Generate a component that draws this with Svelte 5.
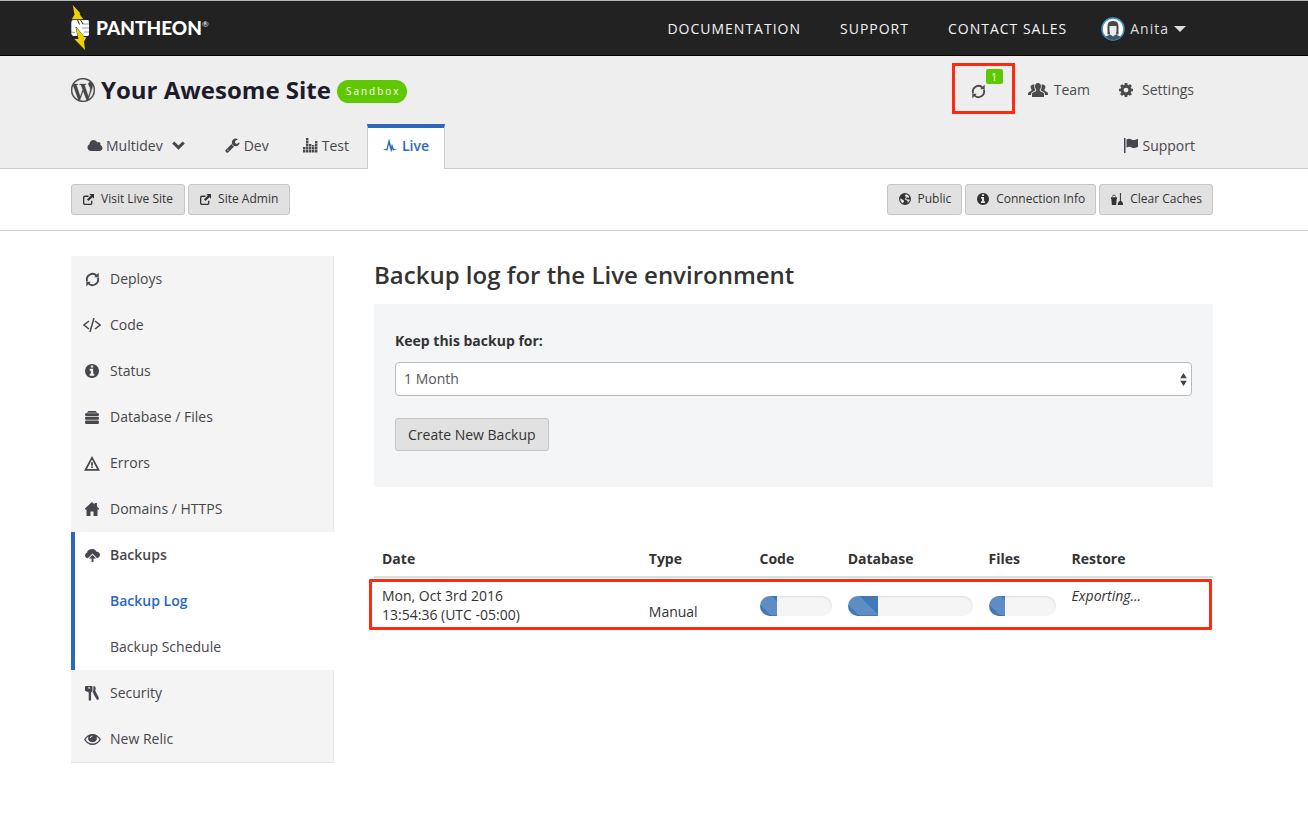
<script>
  const shapes = {
    cloud: { box: '0 0 2048 1792', d: 'M1984 1152q0 159-112.5 271.5t-271.5 112.5h-1088q-185 0-316.5-131.5t-131.5-316.5q0-132 71-241.5t187-163.5q-2-28-2-43 0-212 150-362t362-150q158 0 286.5 88t187.5 230q70-62 166-62 106 0 181 75t75 181q0 75-41 138 129 30 213 134.5t84 239.5z' },
    info: { box: '128 128 1536 1536', d: 'M1152 1376v-160q0-14-9-23t-23-9h-96v-512q0-14-9-23t-23-9h-320q-14 0-23 9t-9 23v160q0 14 9 23t23 9h96v320h-96q-14 0-23 9t-9 23v160q0 14 9 23t23 9h448q14 0 23-9t9-23zm-128-896v-160q0-14-9-23t-23-9h-192q-14 0-23 9t-9 23v160q0 14 9 23t23 9h192q14 0 23-9t9-23zm640 416q0 209-103 385.5t-279.5 279.5-385.5 103-385.5-103-279.5-279.5-103-385.5 103-385.5 279.5-279.5 385.5-103 385.5 103 279.5 279.5 103 385.5z' },
    wrench: { box: '64 64 1700 1728', d: 'M448 1472q0-26-19-45t-45-19-45 19-19 45 19 45 45 19 45-19 19-45zm644-420l-682 682q-37 37-90 37-52 0-91-37l-106-108q-38-36-38-90 0-53 38-91l681-681q39 98 114.5 173.5t173.5 114.5zm634-435q0 39-23 106-47 134-164.5 217.5t-258.5 83.5q-185 0-316.5-131.5t-131.5-316.5 131.5-316.5 316.5-131.5q58 0 121.5 16.5t107.5 46.5q16 11 16 28t-16 28l-293 169v224l193 107q5-3 79-48.5t135.5-81 70.5-35.5q15 0 23.5 10t8.5 25z' },
    cog: { box: '128 128 1536 1536', d: 'M1152 896q0-106-75-181t-181-75-181 75-75 181 75 181 181 75 181-75 75-181zm512-109v222q0 12-8 23t-20 13l-185 28q-19 54-39 91 35 50 107 138 10 12 10 25t-9 23q-27 37-99 108t-94 71q-12 0-26-9l-138-108q-44 23-91 38-16 136-29 186-7 28-36 28h-222q-14 0-24.5-8.5t-11.5-21.5l-28-184q-49-16-90-37l-141 107q-10 9-25 9-14 0-25-11-126-114-165-168-7-10-7-23 0-12 8-23 15-21 51-66.5t54-70.5q-27-50-41-99l-183-27q-13-2-21-12.5t-8-23.5v-222q0-12 8-23t19-13l186-28q14-46 39-92-40-57-107-138-10-12-10-24 0-10 9-23 26-36 98.5-107.5t94.5-71.5q13 0 26 10l138 107q44-23 91-38 16-136 29-186 7-28 36-28h222q14 0 24.5 8.5t11.5 21.5l28 184q49 16 90 37l142-107q9-9 24-9 13 0 25 10 129 119 165 170 7 8 7 22 0 12-8 23-15 21-51 66.5t-54 70.5q26 50 41 98l183 28q13 2 21 12.5t8 23.5z' },
    users: { box: '0 0 20 14', d: 'M10 0c1.900 0 3 1.400 3 3.300 0 1.300-.5 2.500-1.200 3.200-.3.900 0 1.500.8 1.900l2.400 1.100c.8.400 1 .9 1 1.800V14H4v-2.700c0-.9.200-1.400 1-1.800l2.400-1.100c.8-.4 1.100-1 .8-1.900C7.500 5.800 7 4.600 7 3.300 7 1.400 8.100 0 10 0zM5.500 1.500c.4 0 .7.100 1 .2C6 3.400 6.300 5.300 7.300 6.800c.1.500-.1.800-.6 1L4.300 9c-.8.400-1.100 1-1.300 3H0V10.800c0-.9.200-1.200.8-1.500l2-1.200c.7-.4.900-1.100.6-1.800C2.800 5.500 2.600 4.700 2.600 4c0-1.500 1.100-2.500 2.900-2.500zM14.500 1.500c-.4 0-.7.100-1 .2.500 1.700.2 3.600-.8 5.100-.1.500.1.800.6 1L15.700 9c.8.400 1.100 1 1.300 3h3v-1.200c0-.9-.2-1.200-.8-1.500l-2-1.200c-.7-.4-.9-1.100-.6-1.800.6-.8.800-1.600.8-2.300 0-1.500-1.100-2.500-2.900-2.500z' },
    chevron: { box: '0 0 13 9', d: 'M2.300.5 6.500 4.500 10.700.5 12.800 2.600 6.500 8.800.2 2.600z' },
    bars: { box: '0 0 15 15', d: 'M0 12h2.400v2.400H0zM0 9h2.400v2.400H0zM3 12h2.400v2.400H3zM3 9h2.400v2.400H3zM3 6h2.400v2.400H3zM3 3h2.400v2.400H3zM3 0h2.400v2.400H3zM6 12h2.400v2.400H6zM6 9h2.400v2.400H6zM6 6h2.400v2.400H6zM9 12h2.400v2.400H9zM9 9h2.400v2.400H9zM9 7h2.400v1.400H9zM12 12h2.400v2.400H12zM12 9h2.400v2.400H12zM12 6h2.400v2.400H12zM12 3h2.400v2.400H12z' },
    pulse: { box: '0 0 14 15', d: 'M0 11.600 3.500 10.800 6 .5 8.200 8.500 9 5.500 10.700 10.800 14 11.600 9.800 12.400 9.200 10.800 8.300 14.500 5.900 6.500 4.400 12.400z' },
    external: { box: '0 0 14 14', d: 'M2.600 2H7v1.700H3c-.7 0-1.300.6-1.300 1.300v6c0 .7.600 1.300 1.300 1.300h6c.7 0 1.300-.6 1.300-1.300V8.500H12v2.900c0 1.500-1.100 2.600-2.600 2.600H2.600C1.100 14 0 12.900 0 11.400V4.600C0 3.100 1.100 2 2.600 2zM8 0h6v6l-2-2-5 5-2-2 5-5z' },
    globe: { box: '0 0 16 16', d: 'M8 0a8 8 0 1 0 0 16A8 8 0 0 0 8 0zM9.500 1.800c1.800.4 3.400 1.700 4.200 3.300l-1 1.400-1.500-.9-1.500.9-.2 1.500 2 .7 2.300-.4.500 1.200-1.200 2.200-1.700 1.700.2-2.400-2-1.700-1.800-.5.600-2.300 1.500-1.500-.8-.7L8.300 5l-.7-1.600zM2 7l2 1.400 2.300 1.100.6 1.800-1.200 1L5.400 14C3.200 12.900 1.700 10.700 1.700 8.300z' },
    flag: { box: '0 0 14 15', d: 'M0 0h1.500v15H0zM2.500 1.500c2-1.200 3.500-1 5 0 1.600 1 3.600.8 6.500-.7v8c-2.500 1.500-4.500 1.600-6.300.6-1.600-1-3.200-1-5.200.2z' },
    bucket: { box: '0 0 14 14', d: 'M0 5h7v2H6.600L6 14H1L.4 7H0zM1.300 4.500C1.500 2.700 2.300 2 3.500 2s2 .7 2.200 2.500H5C4.800 3.300 4.300 2.800 3.500 2.800S2.200 3.300 2 4.500zM10.400 0h1.200v9.500h1L14 12v2H8v-2l1.400-2.500h1z' },
    stack: { box: '0 0 14 13', d: 'M3.500 0h7L12.500 1.800h-11zM1 2.300h12q1 0 1 1.300t-1 1.400H1q-1 0-1-1.400t1-1.300zM1 5.700h12q1 0 1 1.500t-1 1.500H1q-1 0-1-1.500t1-1.500zM1 9.500h12q1 0 1 1.700T13 13H1q-1 0-1-1.800t1-1.700z' },
    warning: { box: '0 0 16 15', d: 'M8 0 16 14.800H0zM8 3.600 3 12.900h10zM7.100 6.200h1.800v3.500H7.100zM7.100 10.500h1.800v1.500H7.100z' },
    home: { box: '0 0 14 14', d: 'M7 0 9.700 2.500V1h2.200v3.500L14 6.600V7.500h-1.500V14H8.500V9.500h-3V14h-4V7.500H0V6.600z' },
    upload: { box: '0 0 16 14', d: 'M8 0c2 0 3.400 1 4 2.700C14.300 2.700 16 4.200 16 6.300c0 1.900-1.300 3.300-3 3.600L8 4.800 3 9.900C1.200 9.700 0 8.600 0 7c0-1.500.9-2.700 2.200-3.100C2.400 1.500 4.800 0 8 0zM8 6.200l3.800 4H9V14H7v-3.800H4.200z' },
    keys: { box: '0 0 15 16', d: 'M1 0h6c.8 0 1 .4 1 1v4c0 .7-.4 1.100-1.200 1.500L6.500 7v8L5.300 16 4 15V7L3 6.500 0 5V1c0-.6.300-1 1-1zM3.500 1.300v1.400h2V1.300zM9 0c1.500.200 2.600 1 2.500 2.500L11 5l3.800 7.500-.3 2.200h-1.700L9 8.500V7.200L7.800 6.800C9 5.500 9 4.500 9 3z' },
    eye: { box: '0 0 17 11', d: 'M8.500 0C12 0 15 2 17 5.500 15 9 12 11 8.500 11S2 9 0 5.500C2 2 5 0 8.500 0zM4.600 2.600C3.300 3.300 2.200 4.300 1.500 5.500 3 8 5.500 9.600 8.500 9.600s5.500-1.600 7-4.100c-.7-1.200-1.800-2.200-3.100-2.900 1.500 3-.6 5.700-3.900 5.700S3.100 5.600 4.600 2.600zM8.500 1.700C7 1.700 6 2.600 5.900 4.100h1C7 3.200 7.600 2.600 8.500 2.600z' },
    caret: { box: '0 0 12 6', d: 'M0 0h12L6 6z' }
  };

  const topLinks = ['DOCUMENTATION', 'SUPPORT', 'CONTACT SALES'];

  const menu = [
    { label: 'Deploys', icon: 'refresh', w: 15, h: 15 },
    { label: 'Code', icon: 'code', w: 18, h: 14 },
    { label: 'Status', icon: 'info', w: 14, h: 14 },
    { label: 'Database / Files', icon: 'stack', w: 14, h: 13 },
    { label: 'Errors', icon: 'warning', w: 16, h: 15 },
    { label: 'Domains / HTTPS', icon: 'home', w: 14, h: 14 },
    {
      label: 'Backups', icon: 'upload', w: 15, h: 13,
      children: [{ label: 'Backup Log', active: true }, { label: 'Backup Schedule', active: false }]
    },
    { label: 'Security', icon: 'keys', w: 14, h: 15 },
    { label: 'New Relic', icon: 'eye', w: 17, h: 11 }
  ];

  const periods = ['1 Month', '6 Months', '1 Year'];
  let keep = $state('1 Month');

  const backup = { day: 'Mon, Oct 3rd 2016', time: '13:54:36 (UTC -05:00)', type: 'Manual', parts: [24, 24, 24] };
</script>

{#snippet icon(name, w, h)}
  {#if name === 'code'}
    <svg class="icon" width={w} height={h} viewBox="0 0 18 14" fill="none" stroke="currentColor" stroke-width="1.500" aria-hidden="true">
      <path d="M6 3 1 7l5 4M12 3l5 4-5 4M11 0 7 14" />
    </svg>
  {:else if name === 'refresh'}
    <svg class="icon" width={w} height={h} viewBox="0 0 16 16" fill="none" stroke="currentColor" stroke-width="1.900" aria-hidden="true">
      <path d="M2.300 10A6.100 6.100 0 0 1 12.400 3.800M13.700 6A6.100 6.100 0 0 1 3.600 12.200" />
      <path fill="currentColor" stroke="none" d="M14.600.9V5.500H9.800zM1.400 15.100V10.500H6.200z" />
    </svg>
  {:else}
    <svg class="icon" width={w} height={h} viewBox={shapes[name].box} fill="currentColor" fill-rule="evenodd" aria-hidden="true">
      <path d={shapes[name].d} />
    </svg>
  {/if}
{/snippet}

<div class="page">
  <header class="topbar">
    <div class="wrap topbar-row">
      <a class="logo" href="#home">
        <svg width="19" height="46" viewBox="0 0 19 46" aria-hidden="true">
          <path fill="#fff" d="M2.500 15H17.500l.5 3v12l-1 1H2L.3 29V18q0-3 2.200-3z" />
          <path fill="none" stroke="#555" stroke-width=".6" d="M11.500 19h6.500M11 23h7M13 27h5M0 27l4 .5" />
          <path fill="none" stroke="#222" stroke-width="1" d="M6.500 15l2 4.500M9.500 15l2.500 4" />
          <path fill="#efd000" d="M1.800 0 9.500 8.500 8.500 9 12.300 14.300H.8L3.500 9.500z" />
          <path fill="#efd000" stroke="#222" stroke-width=".8" paint-order="stroke" d="M5 22 13 32h2.500L13 36.500l1 8.500L3.300 34H7.500z" />
        </svg>
        <span class="logo-text">PANTHEON<sup>®</sup></span>
      </a>
      <nav class="topnav">
        {#each topLinks as link}
          <a href="#top">{link}</a>
        {/each}
        <button class="user" type="button">
          <svg width="24" height="24" viewBox="0 0 24 24" aria-hidden="true">
            <circle cx="12" cy="12" r="11" fill="#fff" stroke="#3e93c6" stroke-width="1.500" />
            <path fill="#484848" d="M6.500 17.500V9Q6.500 4 12 4t5.500 5v8.500H15V10H9v7.500z" />
            <path fill="#e6ebee" d="M8.500 9h7v5q0 2.500-2 3.500v2h-3v-2q-2-1-2-3.500z" />
            <path fill="#41566b" d="M4.500 19.500 9.500 17.500 12 19.500l2.500-2 5 2Q16.500 23 12 23t-7.500-3.500z" />
          </svg>
          <span>Anita</span>
          {@render icon('caret', 12, 6)}
        </button>
      </nav>
    </div>
  </header>

  <section class="sitehead">
    <div class="wrap">
      <div class="title-row">
        <svg class="wp" width="24" height="24" viewBox="0 0 24 24" fill="currentColor" stroke="currentColor" stroke-width=".3" aria-hidden="true">
          <path d="M21.469 6.825c.84 1.537 1.318 3.3 1.318 5.175 0 3.979-2.156 7.456-5.363 9.325l3.295-9.527c.615-1.54.82-2.771.82-3.864 0-.405-.026-.78-.07-1.11m-7.981.105c.647-.03 1.232-.105 1.232-.105.582-.075.514-.93-.067-.899 0 0-1.755.135-2.88.135-1.064 0-2.85-.15-2.85-.15-.585-.03-.661.855-.075.885 0 0 .54.061 1.125.09l1.68 4.605-2.37 7.08L5.354 6.9c.649-.03 1.234-.1 1.234-.1.585-.075.516-.93-.065-.896 0 0-1.746.138-2.874.138-.2 0-.438-.008-.69-.015C4.911 3.15 8.235 1.215 12 1.215c2.809 0 5.365 1.072 7.286 2.833-.046-.003-.091-.009-.141-.009-1.06 0-1.812.923-1.812 1.914 0 .89.513 1.643 1.06 2.531.411.72.89 1.643.89 2.977 0 .915-.354 1.994-.821 3.479l-1.075 3.585-3.9-11.61.001.014zM12 22.784c-1.059 0-2.081-.153-3.048-.437l3.237-9.406 3.315 9.087c.024.053.05.101.078.149-1.12.393-2.325.609-3.582.609M1.211 12c0-1.564.336-3.05.935-4.39L7.29 21.709C3.694 19.96 1.212 16.271 1.211 12M12 0C5.385 0 0 5.385 0 12s5.385 12 12 12 12-5.385 12-12S18.615 0 12 0" />
        </svg>
        <h1>Your Awesome Site</h1>
        <span class="plan">Sandbox</span>
        <div class="actions">
          <button class="jobs" type="button" aria-label="Workflows">
            {@render icon('refresh', 15, 15)}
            <span class="count">1</span>
          </button>
          <a class="team" href="#team">{@render icon('users', 20, 14)}Team</a>
          <a class="settings" href="#settings">{@render icon('cog', 14, 14)}Settings</a>
        </div>
      </div>
      <nav class="tabs">
        <a class="tab multidev" href="#multidev">{@render icon('cloud', 16, 14)}Multidev<span class="more">{@render icon('chevron', 13, 9)}</span></a>
        <a class="tab" href="#dev">{@render icon('wrench', 15, 15)}Dev</a>
        <a class="tab" href="#test">{@render icon('bars', 15, 15)}Test</a>
        <a class="tab active" href="#live">{@render icon('pulse', 14, 15)}Live</a>
        <a class="support" href="#support">{@render icon('flag', 14, 15)}Support</a>
      </nav>
    </div>
  </section>

  <section class="toolbar">
    <div class="wrap toolbar-row">
      <button class="btn small" type="button">{@render icon('external', 11, 11)}Visit Live Site</button>
      <button class="btn small" type="button">{@render icon('external', 11, 11)}Site Admin</button>
      <div class="env-tools">
        <button class="btn small" type="button">{@render icon('globe', 12, 12)}Public</button>
        <button class="btn small" type="button">{@render icon('info', 12, 12)}Connection Info</button>
        <button class="btn small" type="button">{@render icon('bucket', 12, 12)}Clear Caches</button>
      </div>
    </div>
  </section>

  <div class="wrap content">
    <nav class="side">
      {#each menu as item}
        <div class="group" class:open={item.children}>
          <a class="item" href="#section"><span class="slot">{@render icon(item.icon, item.w, item.h)}</span>{item.label}</a>
          {#each item.children ?? [] as child}
            <a class="item sub" class:current={child.active} href="#section">{child.label}</a>
          {/each}
        </div>
      {/each}
    </nav>

    <main>
      <h2>Backup log for the Live environment</h2>
      <form class="panel" onsubmit={(e) => e.preventDefault()}>
        <label for="keep">Keep this backup for:</label>
        <div class="select">
          <select id="keep" bind:value={keep}>
            {#each periods as p}
              <option>{p}</option>
            {/each}
          </select>
          <svg width="7" height="13" viewBox="0 0 7 13" fill="#444" aria-hidden="true"><path d="M3.500 0 6.800 5.300H.2zM3.500 13 6.800 7.700H.2z" /></svg>
        </div>
        <button class="btn" type="submit">Create New Backup</button>
      </form>

      <div class="log">
        <table>
          <colgroup>
            <col class="c-date" /><col class="c-type" /><col class="c-code" /><col class="c-db" /><col class="c-files" /><col />
          </colgroup>
          <thead>
            <tr><th>Date</th><th>Type</th><th>Code</th><th>Database</th><th>Files</th><th>Restore</th></tr>
          </thead>
          <tbody>
            <tr>
              <td>{backup.day}<br />{backup.time}</td>
              <td class="type">{backup.type}</td>
              {#each backup.parts as value}
                <td><div class="progress"><div class="bar" style="width: {value}%"></div></div></td>
              {/each}
              <td><em>Exporting...</em></td>
            </tr>
          </tbody>
        </table>
        <div class="row-mark"></div>
      </div>
    </main>
  </div>
</div>

<style>
  :global(body) { margin: 0; background: #fff; }
  .page { font: 14px/20px "Open Sans", sans-serif; color: #333; }
  .page, .page * { box-sizing: border-box; }
  a { color: inherit; text-decoration: none; }
  button, select { font: inherit; color: inherit; margin: 0; }
  .icon { flex: none; display: block; }
  .wrap { padding: 0 95px 0 71px; }

  .topbar { background: #222; border-top: 1px solid #b4b8b7; border-bottom: 1px solid #000; }
  .topbar-row { display: flex; align-items: center; justify-content: space-between; height: 54px; }
  .logo { display: flex; align-items: center; gap: 6px; color: #fff; }
  .logo-text { display: flex; font: 900 19px/24px Lato, sans-serif; }
  .logo-text sup { font: 8px/12px Lato, sans-serif; margin-top: 2px; }
  .topnav { display: flex; align-items: center; gap: 39px; color: #f4f4f4; letter-spacing: 1px; padding: 2px 27px 0 0; }
  .user { display: flex; align-items: center; gap: 5px; margin-left: -5px; padding: 0; border: 0; background: none; color: #ddd; letter-spacing: 1px; }

  .sitehead { background: #eee; border-bottom: 1px solid #ccc; color: #46464f; }
  .title-row { display: flex; align-items: center; height: 68px; }
  .wp { color: #464646; }
  h1 { margin: 0 6px; font-size: 24px; line-height: 32px; font-weight: 700; color: #1e1c2c; }
  .plan { margin-top: 2px; padding: 0 6px 0 9px; border-radius: 12px; background: #60c800; color: #fff; font-size: 10px; line-height: 23px; letter-spacing: 2px; }
  .actions { display: flex; align-items: flex-start; margin-left: auto; padding-right: 19px; color: #4b4b4b; }
  .actions a { display: flex; align-items: center; height: 58px; }
  .jobs { position: relative; display: grid; place-items: center; width: 63px; height: 51px; margin-top: 2px; padding: 6px 9px 0 0; border: 3px solid #ff2a0d; background: none; }
  .count { position: absolute; top: 3px; right: 9px; width: 17px; border-radius: 2px; background: #60c800; color: #fff; font-size: 11px; line-height: 15px; }
  .team { gap: 6px; margin-left: 13px; }
  .settings { gap: 9px; margin-left: 29px; }

  .tabs { display: flex; gap: 2px; height: 45px; margin-bottom: -1px; }
  .tab { display: flex; align-items: center; gap: 4px; padding: 0 16px 2px; }
  .more { padding-left: 6px; }
  .multidev { gap: 3px; padding-right: 22px; }
  .tab.active { gap: 5px; padding: 0 15px 6px; border: 1px solid #ccc; border-top: 4px solid #2c68b9; border-bottom: 0; background: #fff; color: #2a69bc; font-weight: 600; }
  .support { display: flex; align-items: center; gap: 4px; margin-left: auto; padding: 0 18px 2px 0; }

  .toolbar { border-bottom: 1px solid #ccc; }
  .toolbar-row { display: flex; align-items: center; gap: 3px; height: 61px; }
  .env-tools { display: flex; gap: 3px; margin-left: auto; }
  .btn { border: 1px solid #c5c5c5; border-radius: 3px; background: #e1e1e1; color: #333; padding: 0 12px; line-height: 31px; }
  .btn.small { display: flex; align-items: center; gap: 7px; padding: 0 11px 1px; font-size: 12px; line-height: 28px; }
  .env-tools .btn.small { padding-right: 10px; }

  .content { display: flex; align-items: flex-start; gap: 40px; padding-top: 25px; padding-bottom: 40px; }
  .side { flex: none; width: 263px; border-bottom: 1px solid #e6e6e6; color: #46464c; }
  .group { background: #f4f4f4; border-right: 1px solid #e9e9e9; }
  .group.open { background: #fff; border-right-color: #fff; border-left: 4px solid #2c68b9; }
  .item { display: flex; align-items: center; height: 46px; padding-left: 12px; }
  .open .item { padding-left: 8px; font-weight: 600; }
  .slot { display: flex; justify-content: center; width: 18px; margin-right: 9px; }
  .open .item.sub { padding-left: 35px; font-weight: 400; }
  .open .item.current { color: #2a69bc; font-weight: 600; }

  main { flex: 1; min-width: 0; }
  h2 { margin: 3px 0 13px; font-size: 24px; line-height: 32px; font-weight: 600; }
  .panel { padding: 27px 21px 36px; background: #f4f5f7; }
  label { display: block; font-weight: 700; }
  .select { display: grid; align-items: center; margin: 11px 0 22px; }
  .select > * { grid-area: 1 / 1; }
  .select svg { justify-self: end; margin-right: 5px; pointer-events: none; }
  select { appearance: none; width: 100%; height: 34px; padding: 0 8px; border: 1px solid #bbb; border-radius: 4px; background: #fff; color: #555; }

  .log { position: relative; margin-top: 54px; }
  table { width: 100%; table-layout: fixed; border-collapse: separate; border-spacing: 0; }
  .c-date { width: 31.8%; }
  .c-type { width: 13.2%; }
  .c-code { width: 10.5%; }
  .c-db { width: 16.8%; }
  .c-files { width: 9.9%; }
  th { padding: 8px 8px 7px; border-bottom: 2px solid #ddd; text-align: left; font-weight: 700; }
  td { padding: 8px; vertical-align: top; line-height: 19px; }
  td.type { padding-top: 24px; }
  .progress { height: 20px; margin-top: 10px; border-radius: 10px; overflow: hidden; background: #f5f5f5; box-shadow: inset 0 1px 2px rgba(0, 0, 0, 0.1); }
  .bar { height: 100%; background: #4279b9 linear-gradient(45deg, rgba(255, 255, 255, 0.15) 25%, transparent 25%, transparent 50%, rgba(255, 255, 255, 0.15) 50%, rgba(255, 255, 255, 0.15) 75%, transparent 75%) -8px 0 / 40px 40px; box-shadow: inset 0 -1px 0 rgba(0, 0, 0, 0.15); }
  .row-mark { position: absolute; top: 38px; left: -5px; right: 1px; height: 51px; border: 3px solid #ff2a0d; border-radius: 1px; pointer-events: none; }
</style>
